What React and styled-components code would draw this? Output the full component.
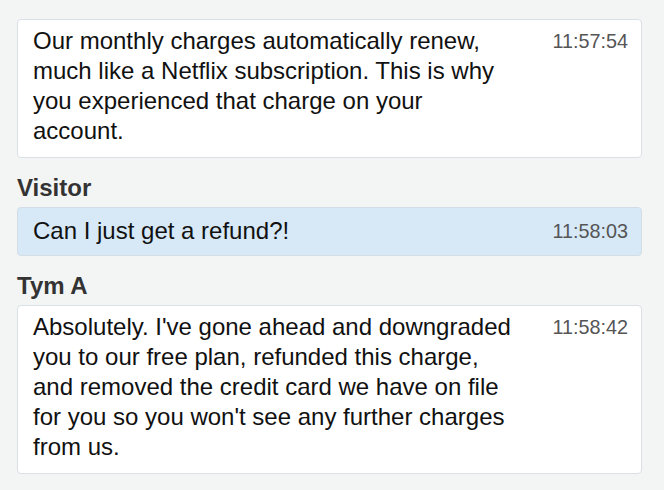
import React from 'react';
import styled, { createGlobalStyle } from 'styled-components';

const GlobalStyle = createGlobalStyle`
  html, body {
    margin: 0;
    padding: 0;
    background: #f3f5f5;
  }
  body {
    font-family: "Liberation Sans", Arial, Helvetica, sans-serif;
  }
`;

const Transcript = styled.div`
  display: flex;
  flex-direction: column;
  padding: 19px 22px 0 17px;
  min-height: 490px;
  box-sizing: border-box;
  background: #f3f5f5;
`;

const Author = styled.div`
  margin: 15px 0 4px;
  font-size: 24px;
  line-height: 30px;
  font-weight: bold;
  color: #333;
`;

const Bubble = styled.div`
  display: flex;
  justify-content: space-between;
  align-items: flex-start;
  padding: ${(p) => (p.$visitor ? '8px 13px 9px 15px' : '6px 13px 11px 15px')};
  background: ${(p) => (p.$visitor ? '#d7e9f7' : '#fff')};
  border: 1px solid ${(p) => (p.$visitor ? '#d3dde6' : '#dae0e7')};
  border-radius: 4px;
`;

const Text = styled.div`
  flex: 0 1 483px;
  font-size: 24px;
  line-height: 30px;
  color: #111;
`;

const Time = styled.span`
  flex-shrink: 0;
  font-size: 19.8px;
  line-height: 30px;
  color: #555;
`;

const messages = [
  {
    time: '11:57:54',
    text: 'Our monthly charges automatically renew, much like a Netflix subscription. This is why you experienced that charge on your account.',
  },
  { author: 'Visitor', visitor: true, time: '11:58:03', text: 'Can I just get a refund?!' },
  {
    author: 'Tym A',
    time: '11:58:42',
    text: "Absolutely. I've gone ahead and downgraded you to our free plan, refunded this charge, and removed the credit card we have on file for you so you won't see any further charges from us.",
  },
];

export default function App() {
  return (
    <>
      <GlobalStyle />
      <Transcript>
        {messages.map((m, i) => (
          <React.Fragment key={i}>
            {m.author && <Author>{m.author}</Author>}
            <Bubble $visitor={m.visitor}>
              <Text>{m.text}</Text>
              <Time>{m.time}</Time>
            </Bubble>
          </React.Fragment>
        ))}
      </Transcript>
    </>
  );
}
